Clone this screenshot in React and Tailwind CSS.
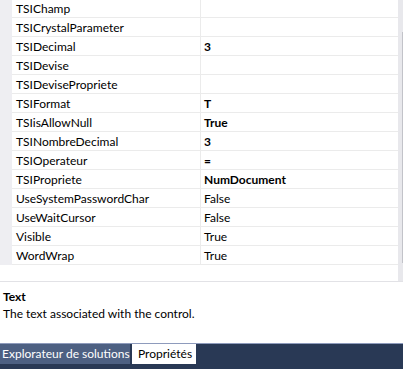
import React from 'react';

const rows = [
    { name: 'TSIChamp', value: '' },
    { name: 'TSICrystalParameter', value: '' },
    { name: 'TSIDecimal', value: '3', bold: true },
    { name: 'TSIDevise', value: '' },
    { name: 'TSIDevisePropriete', value: '' },
    { name: 'TSIFormat', value: 'T', bold: true },
    { name: 'TSIisAllowNull', value: 'True', bold: true },
    { name: 'TSINombreDecimal', value: '3', bold: true },
    { name: 'TSIOperateur', value: '=', bold: true },
    { name: 'TSIPropriete', value: 'NumDocument', bold: true },
    { name: 'UseSystemPasswordChar', value: 'False' },
    { name: 'UseWaitCursor', value: 'False' },
    { name: 'Visible', value: 'True' },
    { name: 'WordWrap', value: 'True' },
];

export default function App() {
    return (
        <div
            className="w-[403px] h-[369px] bg-white flex flex-col overflow-hidden text-[12px] text-black"
            style={{ fontFamily: 'Lato, "Open Sans", sans-serif' }}
        >
            {/* Property grid */}
            <div className="flex h-[282px] border-b border-[#e2e2e6] shrink-0">
                <div className="flex-1 flex flex-col">
                    <div className="flex flex-col -mt-[1px]">
                        {rows.map((r) => (
                            <div key={r.name} className="flex h-[19px]">
                                <div className="w-[12px] bg-[#eeeef2] shrink-0" />
                                <div className="w-[189px] shrink-0 border-b border-r border-[#ebebeb] pl-[4px] leading-[18px] pt-[1px] whitespace-nowrap">
                                    {r.name}
                                </div>
                                <div className={`flex-1 border-b border-[#ebebeb] pl-[3px] leading-[18px] pt-[1px] whitespace-nowrap ${r.bold ? 'font-bold' : ''}`}>
                                    {r.value}
                                </div>
                            </div>
                        ))}
                    </div>
                </div>
                {/* Scrollbar */}
                <div className="w-[5px] bg-[#e8e8ec] flex flex-col">
                    <div className="h-[32px]" />
                    <div className="ml-[4px] h-[231px] bg-[#c2c3c9]" />
                </div>
            </div>

            {/* Description */}
            <div className="h-[61px] shrink-0 pl-[3px] pt-[7px]">
                <div className="font-bold leading-[16px]">Text</div>
                <div className="leading-[18px]">The text associated with the control.</div>
            </div>

            {/* Tabs */}
            <div className="flex-1 bg-[#293955] border-t border-[#8e9bbc] flex items-start">
                <div className="h-[20px] w-[130px] bg-[#4d6082] text-white pl-[2px] leading-[20px] whitespace-nowrap">
                    Explorateur de solutions
                </div>
                <div className="h-[20px] ml-[2px] w-[64px] bg-white text-black pl-[6px] leading-[20px] whitespace-nowrap">
                    Propriétés
                </div>
            </div>
        </div>
    );
}
